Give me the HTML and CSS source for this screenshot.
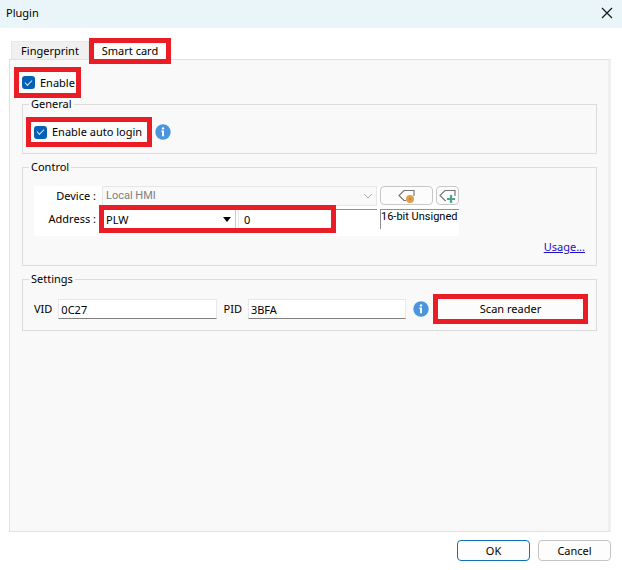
FILE: index.html
```html
<!DOCTYPE html>
<html lang="en">

<head>
    <meta charset="UTF-8">
    <meta name="viewport" content="width=device-width, initial-scale=1.0">
    <title>Plugin</title>
    <link rel="stylesheet" href="styles.css">
</head>

<body>
    <header class="titlebar">
        <h1>Plugin</h1>
        <button class="close" aria-label="Close">
            <svg width="12" height="12" viewBox="0 0 12 12">
                <path d="M1 1L11 11M11 1L1 11" stroke="#1c1c1c" stroke-width="1.3" fill="none" />
            </svg>
        </button>
    </header>

    <main class="content">
        <div class="tabs">
            <button class="tab">Fingerprint</button>
            <button class="tab active marked">Smart card</button>
        </div>

        <div class="panel">
            <label class="check enable marked"><input type="checkbox" checked>Enable</label>

            <fieldset>
                <legend>General</legend>
                <div class="row">
                    <label class="check auto-login marked"><input type="checkbox" checked>Enable auto login</label>
                    <svg class="info" width="16" height="16" viewBox="0 0 16 16">
                        <circle cx="8" cy="8" r="7.7" fill="#4a95de" />
                        <circle cx="8" cy="4.4" r="1.2" fill="#fff" />
                        <path d="M6.4 6.6H9V12.2H7V8H6.4Z" fill="#fff" />
                    </svg>
                </div>
            </fieldset>

            <fieldset>
                <legend>Control</legend>
                <div class="address-form">
                    <div class="form-row">
                        <label class="form-label" for="device">Device :</label>
                        <select class="device" id="device" disabled>
                            <option>Local HMI</option>
                        </select>
                        <button class="tag-button wide" aria-label="Tag settings">
                            <svg width="20" height="16" viewBox="0 0 20 16">
                                <path d="M17 8V2.5H7L2 7.5L7 12.5H9" fill="none" stroke="#777" stroke-width="1.2" />
                                <circle cx="13" cy="11" r="4" fill="#dda04d" />
                                <circle cx="13" cy="11" r="1.2" fill="#c98a38" />
                            </svg>
                        </button>
                        <button class="tag-button" aria-label="Add tag">
                            <svg width="20" height="16" viewBox="0 0 20 16">
                                <path d="M17 8V2.5H7L2 7.5L7 12.5H8" fill="none" stroke="#777" stroke-width="1.2" />
                                <path d="M13 7V15M9 11H17" stroke="#4aa586" stroke-width="2.2" />
                            </svg>
                        </button>
                    </div>
                    <div class="form-row">
                        <label class="form-label" for="address">Address :</label>
                        <div class="address">
                            <select class="register" id="address">
                                <option>PLW</option>
                            </select>
                            <input class="offset" type="text" value="0" aria-label="Address offset">
                        </div>
                        <span class="format">16-bit Unsigned</span>
                    </div>
                </div>
                <div class="usage"><a href="#">Usage...</a></div>
            </fieldset>

            <fieldset class="settings">
                <legend>Settings</legend>
                <div class="row">
                    <label class="reader-id">VID<input type="text" value="0C27"></label>
                    <label class="reader-id">PID<input type="text" value="3BFA"></label>
                    <svg class="info" width="16" height="16" viewBox="0 0 16 16">
                        <circle cx="8" cy="8" r="7.7" fill="#4a95de" />
                        <circle cx="8" cy="4.4" r="1.2" fill="#fff" />
                        <path d="M6.4 6.6H9V12.2H7V8H6.4Z" fill="#fff" />
                    </svg>
                    <button class="scan marked">Scan reader</button>
                </div>
            </fieldset>
        </div>

        <footer class="actions">
            <button class="action primary">OK</button>
            <button class="action">Cancel</button>
        </footer>
    </main>
</body>

</html>
```
FILE: styles.css
```css
*,
*::before,
*::after {
    margin: 0;
    padding: 0;
    box-sizing: border-box;
}

body {
    display: flex;
    flex-direction: column;
    min-height: 100vh;
    background: #fff;
    color: #000;
    font: 11px/14px "Noto Sans", sans-serif;
}

button,
input,
select {
    font: inherit;
    color: inherit;
    border: none;
    border-radius: 0;
    background: none;
}

.marked {
    outline: 5px solid #ea1c26;
}

/* Title bar */
.titlebar {
    display: flex;
    align-items: center;
    justify-content: space-between;
    height: 28px;
    padding: 0 9px 2px 6px;
    background: #e9f5f8;
}

.titlebar h1 {
    font-size: 11px;
    font-weight: 400;
}

.close {
    display: flex;
}

.content {
    flex: 1;
    display: flex;
    flex-direction: column;
    padding: 13px 11px 9px 9px;
}

/* Tabs */
.tabs {
    display: flex;
    height: 18px;
    padding-left: 2px;
}

.tab {
    width: 78px;
    background: #f0f0f0;
    border: 1px solid #e8e8e8;
    border-bottom: none;
}

.tab.active {
    position: relative;
    width: 72px;
    height: 16px;
    margin: 2px 0 0 5px;
    background: #fcfcfc;
    border: none;
}

.panel {
    flex: 1;
    display: flex;
    flex-direction: column;
    gap: 6px;
    padding: 12px 11px 12px 12px;
    background: #f9f9f9;
    border: 1px solid #e0e0e0;
    border-right: 3px solid #f0f0f0;
}

.check {
    display: flex;
    align-items: center;
    gap: 5px;
    background: #fcfcfc;
    white-space: nowrap;
}

.check input {
    appearance: none;
    width: 13px;
    height: 13px;
    border-radius: 3px;
    background: #0560b6;
    display: grid;
    place-items: center;
}

.check input:checked::before {
    content: "";
    width: 7px;
    height: 4px;
    margin-bottom: 2px;
    border: solid #d4e6f6;
    border-width: 0 0 1px 1px;
    transform: rotate(-45deg);
}

.enable {
    align-self: flex-start;
    width: 57px;
    height: 21px;
    margin: 0 0 -2px -3px;
    padding-left: 3px;
}

.auto-login {
    width: 116px;
    height: 20px;
    margin: 0 1px 0 -3px;
    padding-left: 3px;
}

fieldset {
    min-width: 0;
    padding: 11px;
    border: 1px solid #dcdcdc;
}

fieldset.settings {
    padding-top: 13px;
}

legend {
    margin-left: -5px;
    padding: 0 2px;
}

.row {
    display: flex;
    align-items: center;
    gap: 7px;
}

.info {
    flex: none;
}

/* Address form */
.address-form {
    display: flex;
    flex-direction: column;
    gap: 3px;
    max-width: 425px;
    height: 50px;
    margin-top: 1px;
    background: #fff;
}

.form-row {
    display: flex;
    height: 20px;
    gap: 3px;
}

.form-label {
    flex: none;
    width: 62px;
    margin-right: 3px;
    text-align: right;
    line-height: 20px;
    white-space: nowrap;
}

.device {
    appearance: none;
    flex: 1;
    padding: 0 3px;
    border: 1px solid #e6e6e6;
    color: #808080;
    font-family: Roboto, sans-serif;
    opacity: 1;
    background: #f9f9f9 url("data:image/svg+xml,%3Csvg xmlns='http://www.w3.org/2000/svg' width='10' height='6'%3E%3Cpath d='M1 1L5 5L9 1' fill='none' stroke='%23b0b0b0'/%3E%3C/svg%3E") no-repeat right 3px center;
}

.tag-button {
    display: flex;
    align-items: center;
    justify-content: center;
    width: 23px;
    height: 19px;
    border: 1px solid #c8c8c8;
    border-radius: 4px;
    background: #fcfcfc;
}

.tag-button.wide {
    width: 53px;
}

.tag-button svg {
    flex: none;
}

.address {
    position: relative;
    flex: 1;
    min-width: 0;
    display: flex;
    gap: 2px;
    border-top: 1px solid #909090;
}

/* Frame drawn over the register and most of the offset box */
.address::after {
    content: "";
    position: absolute;
    top: -5px;
    left: -3px;
    width: 237px;
    height: 28px;
    border: 5px solid #ea1c26;
    pointer-events: none;
}

.register {
    appearance: none;
    flex: none;
    width: 134px;
    padding-left: 4px;
    border-right: 1px solid #c8c8c8;
    background: url("data:image/svg+xml,%3Csvg xmlns='http://www.w3.org/2000/svg' width='8' height='5'%3E%3Cpath d='M0 0H8L4 5Z'/%3E%3C/svg%3E") no-repeat right 4px center;
}

.offset {
    flex: 1;
    min-width: 0;
    padding-left: 5px;
    border-left: 1px solid #e6e6e6;
}

.format {
    flex: none;
    width: 79px;
    border: solid #909090;
    border-width: 1px 0 0 1px;
    font-family: Roboto, sans-serif;
    white-space: nowrap;
}

.usage {
    padding-top: 4px;
    text-align: right;
}

.usage a {
    color: #1a10c8;
}

/* Reader settings */
.reader-id {
    flex: 1;
    min-width: 0;
    display: flex;
    align-items: center;
    gap: 6px;
}

.reader-id input {
    flex: 1;
    min-width: 0;
    height: 20px;
    padding: 0 2px;
    background: #fff;
    border: 1px solid #e8e8e8;
    border-bottom-color: #808080;
}

.scan {
    flex: none;
    width: 145px;
    height: 20px;
    margin: 0 2px;
    background: #fcfcfc;
}

/* Footer */
.actions {
    display: flex;
    justify-content: flex-end;
    gap: 8px;
    padding-top: 8px;
}

.action {
    width: 73px;
    height: 21px;
    border: 1px solid #c4c4c4;
    border-radius: 4px;
    background: #fdfdfd;
}

.action.primary {
    border-color: #1070b8;
}
```
